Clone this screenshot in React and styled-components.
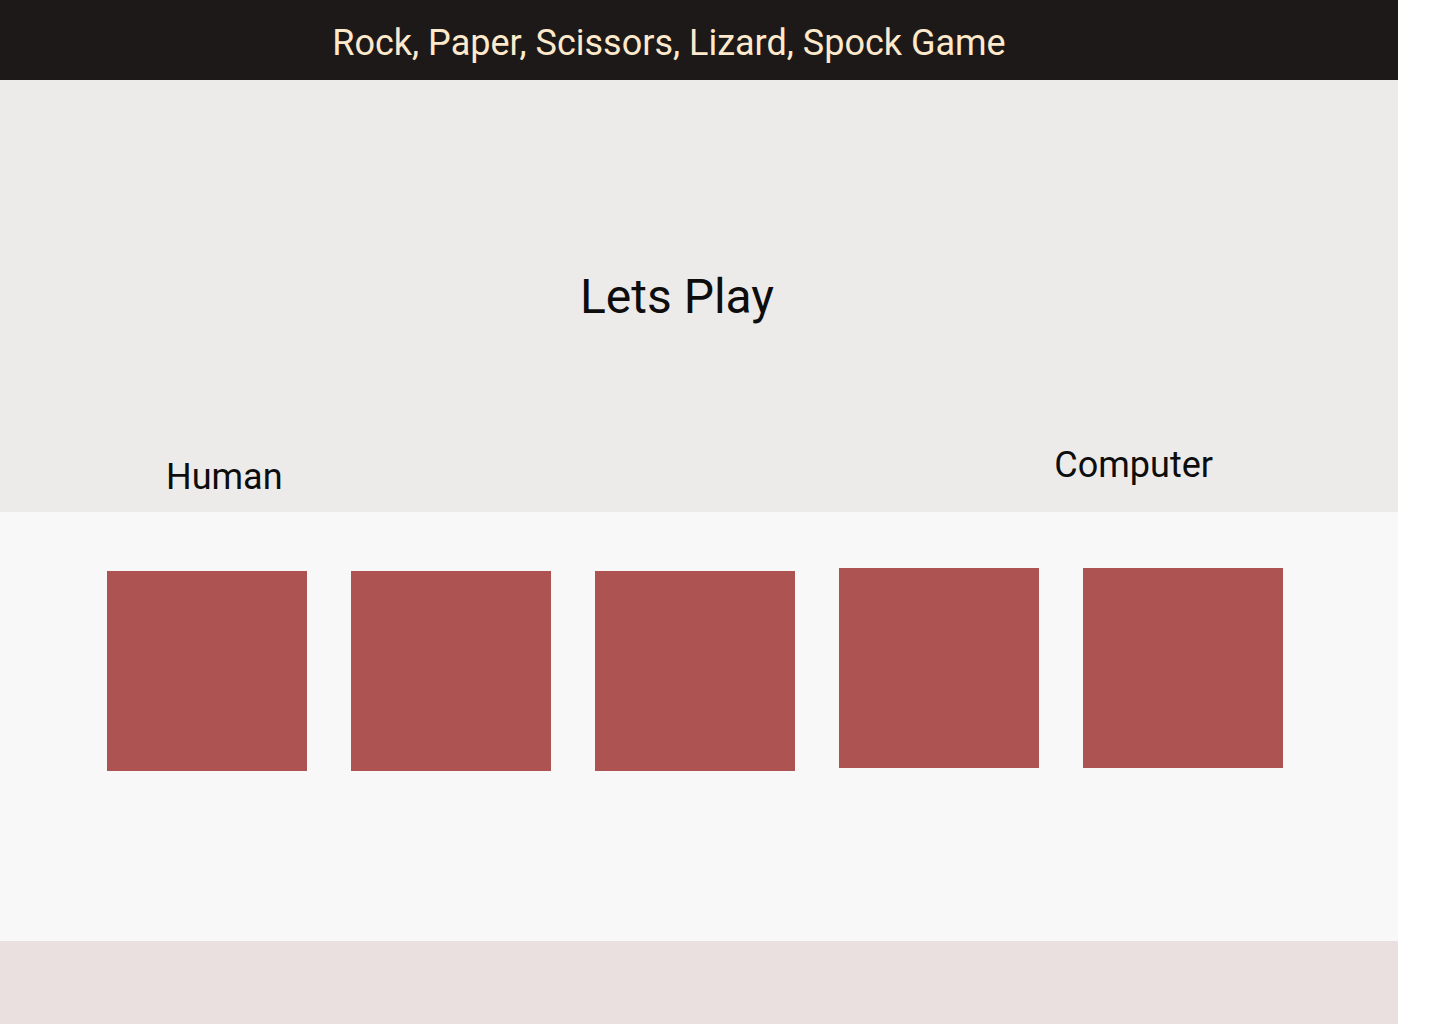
import React from 'react';
import styled, { createGlobalStyle } from 'styled-components';

const GlobalStyle = createGlobalStyle`
  body {
    margin: 0;
    background: #ffffff;
    font-family: Roboto, "Liberation Sans", sans-serif;
  }
`;

const Page = styled.div`
  width: 1398px;
  display: flex;
  flex-direction: column;
`;

const Header = styled.header`
  height: 80px;
  box-sizing: border-box;
  padding: 6px 60px 0 0;
  display: flex;
  align-items: center;
  justify-content: center;
  background: #1d1918;
`;

const Title = styled.h1`
  margin: 0;
  font-size: 36px;
  font-weight: 400;
  color: #fde9cc;
`;

const Stage = styled.section`
  height: 432px;
  box-sizing: border-box;
  display: flex;
  flex-direction: column;
  background: #ecebe9;
`;

const Heading = styled.h2`
  margin: 188px 44px 0 0;
  font-size: 48px;
  font-weight: 400;
  color: #0d0d0d;
  text-align: center;
`;

const LabelRow = styled.div`
  margin-top: auto;
  padding: 0 185px 14px 166px;
  display: flex;
  align-items: flex-start;
  justify-content: space-between;
`;

const Label = styled.span`
  margin-top: ${(p) => p.$drop || 0}px;
  font-size: 36px;
  color: #0d0d0d;
`;

const Board = styled.section`
  height: 429px;
  box-sizing: border-box;
  padding: 56px 0 0 107px;
  background: #f8f8f8;
`;

const ChoiceRow = styled.div`
  display: flex;
  align-items: flex-start;
  gap: 44px;
`;

const Choice = styled.div`
  width: 200px;
  height: 200px;
  margin-top: ${(p) => p.$drop || 0}px;
  background: #ad5352;
`;

const Footer = styled.footer`
  height: 83px;
  background: #ebe0e0;
`;

const choices = [
  { id: 'rock', drop: 3 },
  { id: 'paper', drop: 3 },
  { id: 'scissors', drop: 3 },
  { id: 'lizard', drop: 0 },
  { id: 'spock', drop: 0 },
];

export default function App() {
  return (
    <>
      <GlobalStyle />
      <Page>
        <Header>
          <Title>Rock, Paper, Scissors, Lizard, Spock Game</Title>
        </Header>
        <Stage>
          <Heading>Lets Play</Heading>
          <LabelRow>
            <Label $drop={12}>Human</Label>
            <Label>Computer</Label>
          </LabelRow>
        </Stage>
        <Board>
          <ChoiceRow>
            {choices.map((c) => (
              <Choice key={c.id} $drop={c.drop} />
            ))}
          </ChoiceRow>
        </Board>
        <Footer />
      </Page>
    </>
  );
}
